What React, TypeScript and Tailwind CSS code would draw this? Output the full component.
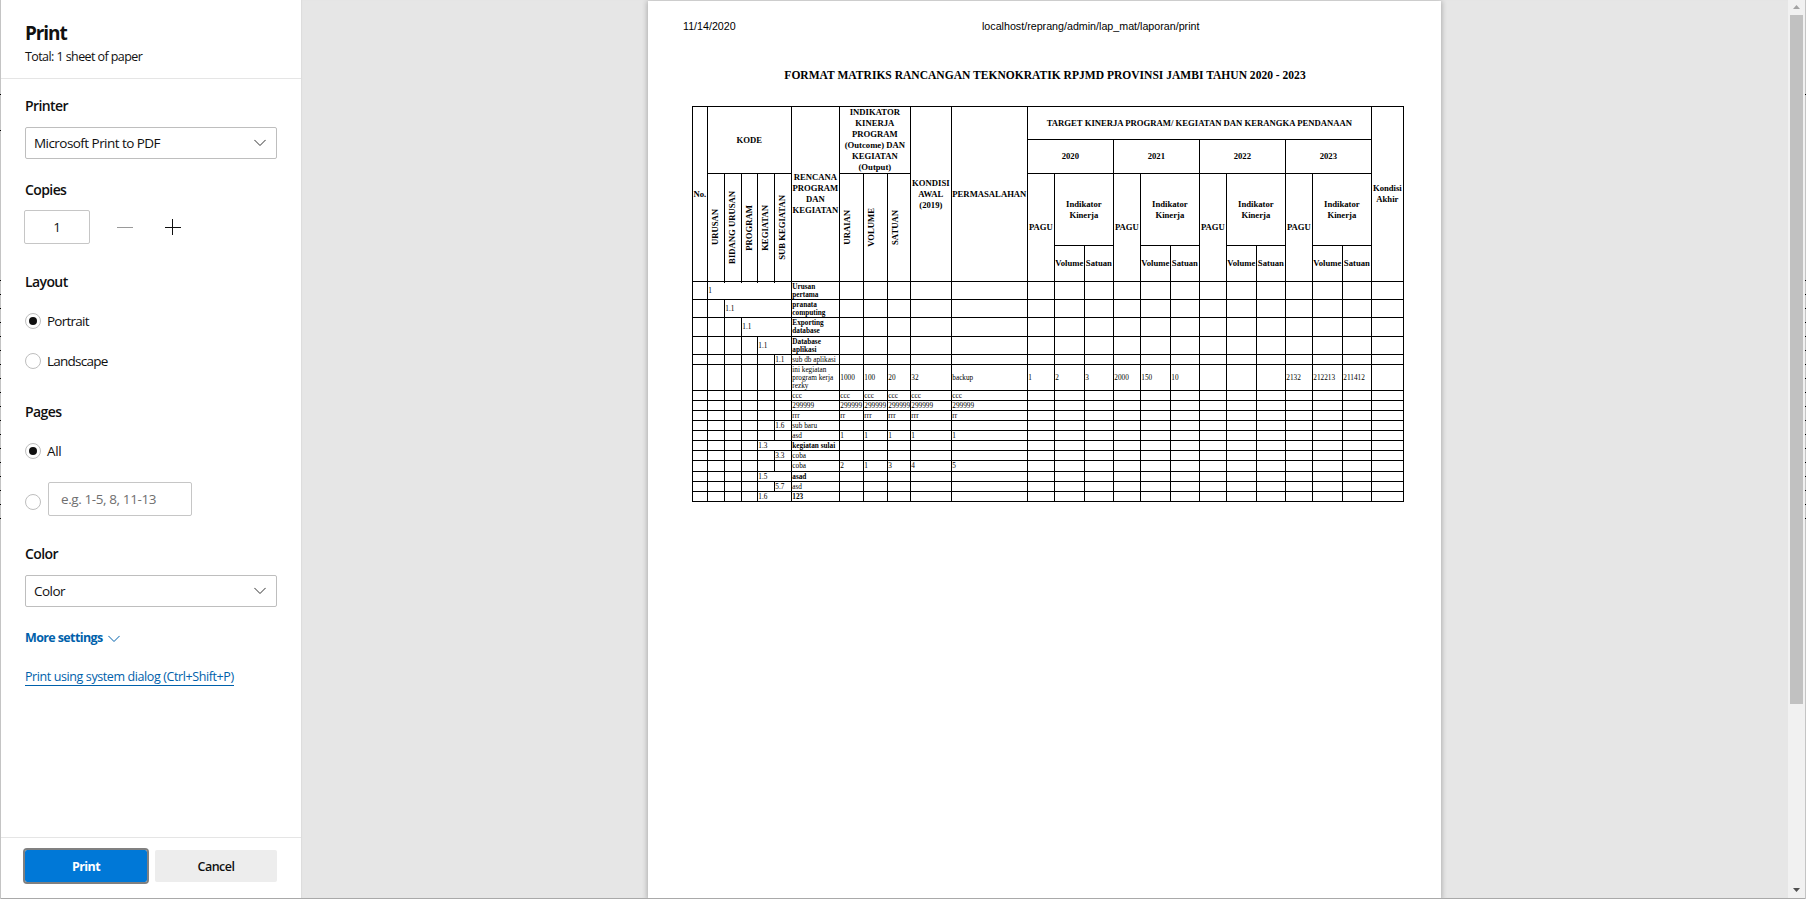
import React from "react";

const ui = "font-['Open_Sans','Noto_Sans',sans-serif]";
const serif = "font-['Liberation_Serif',serif]";

const Chevron = ({ className }: { className: string }) => (
  <svg className={className} width="12" height="8" viewBox="0 0 12 8" fill="none" stroke="currentColor" strokeWidth="1">
    <path d="M0.4 0.9 L6 6.5 L11.6 0.9" />
  </svg>
);

const Label = ({ children }: { children: React.ReactNode }) => (
  <div className="h-5 pt-px text-[14px] leading-5 font-semibold tracking-[-0.6px]">{children}</div>
);

const Select = ({ value, className }: { value: string; className: string }) => (
  <div className={`flex h-8 w-[252px] items-center justify-between rounded-[2px] border border-[#bebebe] pr-[10px] pl-2 text-[13.5px] tracking-[-0.55px] ${className}`}>
    <span>{value}</span>
    <Chevron className="text-[#333]" />
  </div>
);

const Radio = ({ on }: { on?: boolean }) => (
  <span className="flex size-4 shrink-0 items-center justify-center rounded-full border border-[#bebebe]">
    {on && <span className="size-2 rounded-full bg-[#101010]" />}
  </span>
);

function Sidebar() {
  return (
    <aside className={`${ui} flex h-[898px] w-[300px] shrink-0 flex-col bg-white text-[#101010]`}>
      <header className="h-[79px] shrink-0 border-b border-[#e5e5e5] pt-[21px] pl-6">
        <h1 className="h-6 text-[19px] leading-6 font-bold tracking-[-1.1px]">Print</h1>
        <p className="mt-0.5 text-[12.5px] leading-5 tracking-[-0.58px]">Total: 1 sheet of paper</p>
      </header>
      <div className="flex flex-1 flex-col pt-4 pl-6">
        <Label>Printer</Label>
        <Select value="Microsoft Print to PDF" className="mt-3" />
        <div className="h-5" />
        <Label>Copies</Label>
        <div className="mt-[11px] -ml-px flex h-[34px] items-center">
          <div className="flex h-[34px] w-[66px] items-center justify-center rounded-[2px] border border-[#c6c6c6] text-[13.5px]">1</div>
          <svg className="ml-[27px]" width="16" height="17" viewBox="0 0 16 17" shapeRendering="crispEdges">
            <path d="M0 8h16v1H0z" fill="#9a9a9a" />
          </svg>
          <svg className="ml-8" width="16" height="17" viewBox="0 0 16 17" shapeRendering="crispEdges">
            <path d="M0 8h16v1H0zM7 0h1v16H7z" fill="#101010" />
          </svg>
        </div>
        <div className="h-[27px]" />
        <Label>Layout</Label>
        <div className="mt-5 flex h-5 items-center gap-[6px] text-[13.5px] tracking-[-0.75px]"><Radio on />Portrait</div>
        <div className="mt-5 flex h-5 items-center gap-[6px] text-[13.5px] tracking-[-0.75px]"><Radio />Landscape</div>
        <div className="h-[30px]" />
        <Label>Pages</Label>
        <div className="mt-5 flex h-5 items-center gap-[6px] text-[13.5px] tracking-[-0.4px]"><Radio on />All</div>
        <div className="mt-[21px] flex h-[34px] gap-[7px]">
          <div className="pt-3"><Radio /></div>
          <div className="flex h-[34px] w-[144px] items-center rounded-[2px] border border-[#c6c6c6] pt-px pl-3 text-[13.5px] tracking-[-0.4px] text-[#6f6f6f]">e.g. 1-5, 8, 11-13</div>
        </div>
        <div className="h-[27px]" />
        <Label>Color</Label>
        <Select value="Color" className="mt-3" />
        <div className="mt-[21px] flex h-5 items-center gap-[5px] text-[#0061ab]">
          <span className="text-[12.5px] font-bold tracking-[-0.62px]">More settings</span>
          <Chevron className="mt-px" />
        </div>
        <div className="mt-5 h-[18px] self-start border-b border-[#0061ab] text-[12.5px] leading-[18px] tracking-[-0.4px] text-[#0061ab]">Print using system dialog (Ctrl+Shift+P)</div>
      </div>
      <footer className="flex h-[61px] shrink-0 gap-2 border-t border-[#e5e5e5] pt-3 pl-6">
        <button className="flex h-8 w-[122px] items-center justify-center rounded-[2px] bg-[#0078d7] pt-0.5 text-[12.5px] font-bold tracking-[-0.6px] text-white outline-2 outline-[#808080]">Print</button>
        <button className="flex h-8 w-[122px] items-center justify-center rounded-[2px] bg-[#ededed] pt-0.5 text-[12.5px] font-semibold tracking-[-0.5px]">Cancel</button>
      </footer>
    </aside>
  );
}

const H = ({ className, children }: { className: string; children: React.ReactNode }) => (
  <div className={`flex items-center justify-center border-r border-b border-black pr-[0.3px] text-center ${className}`}>
    <span className="whitespace-pre">{children}</span>
  </div>
);

const V = ({ children, tick }: { children: string; tick?: boolean }) => (
  <div className="relative row-span-2 flex items-center border-r border-b border-black">
    <span className="w-[15px] rotate-180 text-center leading-[15px] whitespace-nowrap [writing-mode:vertical-rl]">{children}</span>
    {tick && <i className="absolute -right-px -bottom-[2px] h-px w-px bg-black" />}
  </div>
);

type Row = { level: number; code?: string; bold?: boolean; name: string; vals?: string[] };

const rows: Row[] = [
  { level: 1, code: "1", bold: true, name: "Urusan\npertama" },
  { level: 2, code: "1.1", bold: true, name: "pranata\ncomputing" },
  { level: 3, code: "1.1", bold: true, name: "Exporting\ndatabase" },
  { level: 4, code: "1.1", bold: true, name: "Database\naplikasi" },
  { level: 5, code: "1.1", name: "sub db aplikasi" },
  { level: 5, name: "ini kegiatan\nprogram kerja\nrezky", vals: ["1000", "100", "20", "32", "backup", "1", "2", "3", "2000", "150", "10", "", "", "", "2132", "212213", "211412"] },
  { level: 5, name: "ccc", vals: ["ccc", "ccc", "ccc", "ccc", "ccc"] },
  { level: 5, name: "299999", vals: ["299999", "299999", "299999", "299999", "299999"] },
  { level: 5, name: "rrr", vals: ["rr", "rrr", "rrr", "rrr", "rr"] },
  { level: 5, code: "1.6", name: "sub baru" },
  { level: 5, name: "asd", vals: ["1", "1", "1", "1", "1"] },
  { level: 4, code: "1.3", bold: true, name: "kegiatan sulai" },
  { level: 5, code: "3.3", name: "coba" },
  { level: 5, name: "coba", vals: ["2", "1", "3", "4", "5"] },
  { level: 4, code: "1.5", bold: true, name: "asad" },
  { level: 5, code: "5.7", name: "asd" },
  { level: 4, code: "1.6", bold: true, name: "123" },
];

const spans = ["", "col-span-5", "col-span-4", "col-span-3", "col-span-2", "col-span-1"];
const td = "flex min-w-0 items-center border-r border-b border-black pl-[0.3px] whitespace-pre";

function Matrix() {
  return (
    <div className={`${serif} w-[712px] border-t border-l border-black text-black`}>
      <div className="grid grid-cols-[15px_17px_17px_16px_17px_17px_48px_24px_24px_23px_41px_76px_27px_30px_29px_27px_30px_29px_27px_30px_29px_27px_30px_29px_32px] grid-rows-[33px_34px_72px_36px] text-[8.67px] leading-[11px] font-bold">
        <H className="row-span-4">No.</H>
        <H className="col-span-5 row-span-2">KODE</H>
        <H className="row-span-4">{"RENCANA\nPROGRAM\nDAN\nKEGIATAN"}</H>
        <H className="col-span-3 row-span-2">{"INDIKATOR\nKINERJA\nPROGRAM\n(Outcome) DAN\nKEGIATAN\n(Output)"}</H>
        <H className="row-span-4">{"KONDISI\nAWAL\n(2019)"}</H>
        <H className="row-span-4">PERMASALAHAN</H>
        <H className="col-span-12">TARGET KINERJA PROGRAM/ KEGIATAN DAN KERANGKA PENDANAAN</H>
        <H className="row-span-4">{"Kondisi\nAkhir"}</H>
        {["2020", "2021", "2022", "2023"].map((y) => <H key={y} className="col-span-3">{y}</H>)}
        <V tick>URUSAN</V>
        <V tick>BIDANG URUSAN</V>
        <V tick>PROGRAM</V>
        <V tick>KEGIATAN</V>
        <V>SUB KEGIATAN</V>
        <V>URAIAN</V>
        <V>VOLUME</V>
        <V>SATUAN</V>
        {[0, 1, 2, 3].map((i) => (
          <React.Fragment key={i}>
            <H className="row-span-2">PAGU</H>
            <H className="col-span-2">{"Indikator\nKinerja"}</H>
          </React.Fragment>
        ))}
        {[0, 1, 2, 3].map((i) => (
          <React.Fragment key={i}>
            <H className="">Volume</H>
            <H className="">Satuan</H>
          </React.Fragment>
        ))}
      </div>
      <div className="grid grid-cols-[15px_17px_17px_16px_17px_17px_48px_24px_24px_23px_41px_76px_27px_30px_29px_27px_30px_29px_27px_30px_29px_27px_30px_29px_32px] grid-rows-[18px_18px_19px_18px_10px_26px_10px_10px_10px_10px_10px_10px_10px_11px_10px_10px_10px] text-[7.25px] leading-[8px]">
        {rows.map((r, i) => (
          <React.Fragment key={i}>
            {Array.from({ length: r.level }, (_, k) => <div key={k} className={td} />)}
            <div className={`${td} ${spans[r.level]}`}>{r.code}</div>
            <div className={r.bold ? `${td} font-bold` : td}>{r.name}</div>
            {Array.from({ length: 18 }, (_, k) => <div key={k} className={td}>{r.vals?.[k]}</div>)}
          </React.Fragment>
        ))}
      </div>
    </div>
  );
}

const ticks = [94, 130, 280, 294, 308, 322, 336, 350, 364, 378, 392, 406, 420, 434, 448, 462, 476, 490, 504, 518];

const Edge = ({ skip }: { skip?: number }) => (
  <div className="relative w-px shrink-0 bg-[#c4c4c4]">
    {ticks.filter((t) => t !== skip).map((t) => (
      <i key={t} className="absolute left-0 h-px w-px bg-black" style={{ top: t }} />
    ))}
  </div>
);

export default function App() {
  return (
    <div className="flex h-[899px] w-[1806px] overflow-hidden bg-[#e6e6e6]">
      <Edge />
      <div className="flex min-w-0 flex-1 flex-col border-b border-[#a9a9a9]">
        <div className="flex h-[898px]">
          <Sidebar />
          <main className="flex flex-1 overflow-hidden bg-[#e6e6e6] pt-px pl-[347px] shadow-[inset_1px_0_1px_#dcdcdc]">
            <div className="h-[897px] w-[793px] shrink-0 bg-white shadow-[0_1px_5px_1px_rgba(0,0,0,0.24)]">
              <div className="flex h-[57px] pt-[18px] pl-[35px] font-['Liberation_Sans',sans-serif] text-[10.7px] leading-[14px] text-black">
                <span className="w-[299px]">11/14/2020</span>
                <span>localhost/reprang/admin/lap_mat/laporan/print</span>
              </div>
              <h2 className={`${serif} mt-2 mb-[22px] pl-px text-center text-[11.55px] leading-[18px] font-bold text-black`}>FORMAT MATRIKS RANCANGAN TEKNOKRATIK RPJMD PROVINSI JAMBI TAHUN 2020 - 2023</h2>
              <div className="pl-11"><Matrix /></div>
            </div>
          </main>
          <div className="flex w-[17px] shrink-0 flex-col items-center bg-[#f1f1f1]">
            <svg width="17" height="15" viewBox="0 0 17 15"><path d="M5 9h7L8.5 5z" fill="#a3a3a3" /></svg>
            <div className="h-[689px] w-[13px] bg-[#c1c1c1]" />
            <div className="flex-1" />
            <svg width="17" height="16" viewBox="0 0 17 16"><path d="M5 6h7L8.5 10z" fill="#505050" /></svg>
          </div>
        </div>
      </div>
      <Edge skip={130} />
    </div>
  );
}
